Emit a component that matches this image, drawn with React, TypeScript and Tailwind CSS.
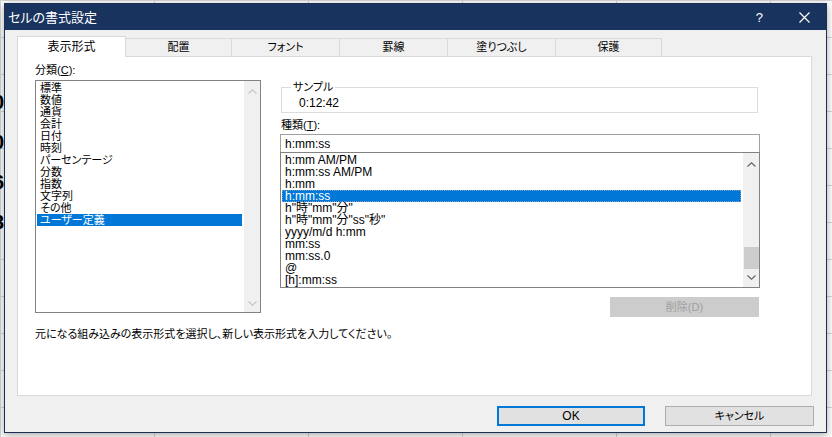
const categories = [
  "標準",
  "数値",
  "通貨",
  "会計",
  "日付",
  "時刻",
  "パーセンテージ",
  "分数",
  "指数",
  "文字列",
  "その他",
  "ユーザー定義",
];

const formats = [
  "h:mm AM/PM",
  "h:mm:ss AM/PM",
  "h:mm",
  "h:mm:ss",
  'h"時"mm"分"',
  'h"時"mm"分"ss"秒"',
  "yyyy/m/d h:mm",
  "mm:ss",
  "mm:ss.0",
  "@",
  "[h]:mm:ss",
];

const tabs = [
  { label: "表示形式", w: "w-[109px]" },
  { label: "配置", w: "w-[107px]" },
  { label: "フォント", w: "w-[109px]" },
  { label: "罫線", w: "w-[109px]" },
  { label: "塗りつぶし", w: "w-[109px]" },
  { label: "保護", w: "w-[107px]" },
];

const Chevron = ({ up, color }: { up?: boolean; color: string }) => (
  <svg width="9" height="5" viewBox="0 0 9 5" className={up ? "" : "rotate-180"}>
    <path d="M0.5 4.5 L4.5 0.8 L8.5 4.5" fill="none" stroke={color} strokeWidth="1.1" />
  </svg>
);

const App = () => {
  return (
    <div className="relative w-[832px] h-[437px] overflow-hidden bg-white bg-[linear-gradient(#d4d4d4_1px,transparent_1px),linear-gradient(90deg,#d4d4d4_1px,transparent_1px)] bg-[length:154px_37px] font-['Liberation_Sans','Noto_Sans_CJK_JP',sans-serif] [font-feature-settings:'palt'] text-black">
      {/* the sheet behind the dialog */}
      <div className="absolute left-[236px] -top-[19px] text-[22px] font-bold leading-none tracking-[2px]">
        10:00/5:30:20
      </div>
      <div className="absolute -left-[7px] top-[92px] flex flex-col gap-[20px] text-[20px] font-bold leading-none">
        <span>0</span>
        <span>0</span>
        <span>6</span>
        <span>3</span>
      </div>

      {/* dialog */}
      <div className="absolute left-[4px] top-[3px] w-[823px] h-[430px] flex flex-col border border-[#1b2f52] shadow-[0_2px_8px_rgba(0,0,0,0.35)]">
        <div className="h-[26px] bg-[#19335f] flex items-center pl-[3px] text-white">
          <span className="text-[13px] leading-none">セルの書式設定</span>
          <span className="ml-auto mr-[36px] text-[13px] leading-none">?</span>
          <svg width="11" height="11" viewBox="0 0 11 11" className="mr-[16px]">
            <path d="M0.5 0.5 L10.5 10.5 M10.5 0.5 L0.5 10.5" stroke="#ffffff" strokeWidth="1.2" />
          </svg>
        </div>

        <div className="flex-1 bg-[#f0f0f0] pl-[12px] pr-[14px] pt-[6px] flex flex-col">
          {/* tabs */}
          <div className="flex items-end h-[20px]">
            {tabs.map((t, i) =>
              i === 0 ? (
                <div
                  key={t.label}
                  className={`${t.w} h-[21px] -mb-px relative z-10 bg-white border border-[#d9d9d9] border-b-0 flex items-center justify-center text-[12px] leading-none`}
                >
                  {t.label}
                </div>
              ) : (
                <div
                  key={t.label}
                  className={`${t.w} h-[18px] -ml-px bg-[#f0f0f0] border border-[#d9d9d9] border-b-0 flex items-center justify-center text-[11px] leading-none`}
                >
                  {t.label}
                </div>
              )
            )}
          </div>

          {/* panel */}
          <div className="h-[340px] bg-white border border-[#d9d9d9] flex flex-col px-[17px] pt-[7px]">
            <div className="flex gap-[19px]">
              {/* 分類 */}
              <div className="w-[226px] flex flex-col">
                <div className="h-[12px] text-[11px] leading-[12px]">
                  分類(<span className="underline">C</span>):
                </div>
                <div className="mt-[4px] h-[233px] border border-[#828282] flex">
                  <div className="flex-1 pt-px pl-px pr-[2px]">
                    {categories.map((c, i) => (
                      <div
                        key={c}
                        className={`h-[12px] leading-[12px] text-[11px] px-[3px] whitespace-nowrap ${
                          i === categories.length - 1 ? "bg-[#0078d7] text-white" : ""
                        }`}
                      >
                        {c}
                      </div>
                    ))}
                  </div>
                  <div className="w-[16px] bg-[#f0f0f0] flex flex-col items-center justify-between pt-[8px] pb-[6px]">
                    <Chevron up color="#c4c4c4" />
                    <Chevron color="#c4c4c4" />
                  </div>
                </div>
              </div>

              {/* 種類 */}
              <div className="w-[480px] flex flex-col pt-[17px]">
                <fieldset className="h-[32px] border border-[#dcdcdc] ml-px mr-[2px]">
                  <legend className="ml-[9px] px-[2px] text-[11px] leading-[12px]">サンプル</legend>
                  <div className="text-[12px] leading-[12px] mt-[4px] pl-[17px]">0:12:42</div>
                </fieldset>
                <div className="mt-[6px] h-[12px] text-[11px] leading-[12px] pl-px">
                  種類(<span className="underline">T</span>):
                </div>
                <div className="mt-[3px] h-[18px] border border-b-0 border-[#a0a0a0] flex items-center pl-[4px] text-[12px] leading-none">
                  h:mm:ss
                </div>
                <div className="h-[136px] border border-[#828282] flex">
                  <div className="flex-1 pt-px pl-px pr-[2px]">
                    {formats.map((f) => (
                      <div
                        key={f}
                        className={`h-[12px] leading-[12px] text-[12px] px-[3px] whitespace-nowrap ${
                          f === "h:mm:ss"
                            ? "bg-[#0078d7] text-white outline outline-1 outline-dotted outline-[#7a9cc4] -outline-offset-1"
                            : ""
                        }`}
                      >
                        {f}
                      </div>
                    ))}
                  </div>
                  <div className="w-[16px] bg-[#f0f0f0] flex flex-col items-center pt-[9px] pb-[7px]">
                    <Chevron up color="#606060" />
                    <div className="flex-1" />
                    <div className="w-[15px] h-[22px] bg-[#cdcdcd] mb-[6px]" />
                    <Chevron color="#606060" />
                  </div>
                </div>
                <div className="mt-[9px] self-end mr-px w-[149px] h-[20px] bg-[#cccccc] flex items-center justify-center text-[11px] leading-none text-[#9f9f9f]">
                  削除(D)
                </div>
              </div>
            </div>
            <div className="mt-[11px] text-[11px] leading-[12px] whitespace-nowrap">
              元になる組み込みの表示形式を選択し、新しい表示形式を入力してください。
            </div>
          </div>

          {/* buttons */}
          <div className="mt-[10px] -mr-[2px] flex justify-end gap-[20px]">
            <div className="w-[148px] h-[20px] border-2 border-[#0078d7] bg-[#e1e1e1] flex items-center justify-center text-[12px] leading-none">
              OK
            </div>
            <div className="w-[149px] h-[20px] border border-[#adadad] bg-[#e1e1e1] flex items-center justify-center text-[11px] leading-none">
              キャンセル
            </div>
          </div>
        </div>
      </div>
    </div>
  );
};

export default App;
